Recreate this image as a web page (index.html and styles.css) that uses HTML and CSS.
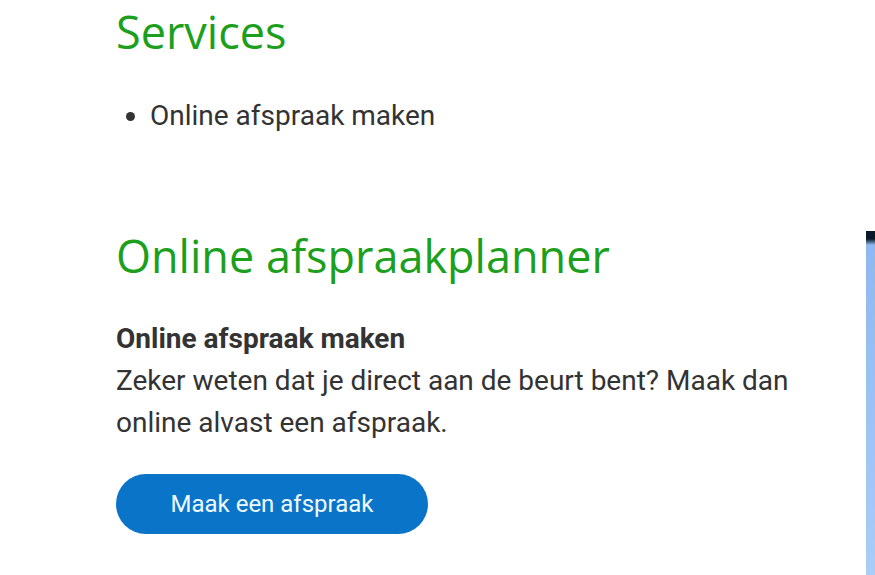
FILE: index.html
```html
<!DOCTYPE html>
<html lang="nl">
<head>
  <meta charset="UTF-8" />
  <title>Online afspraakplanner</title>
  <link rel="stylesheet" href="styles.css">
</head>
<body>

  <div class="page">
    <main class="content">
      <h2>Services</h2>
      <ul class="services">
        <li>Online afspraak maken</li>
      </ul>

      <h2 class="planner-title">Online afspraakplanner</h2>

      <div class="planner">
        <p class="planner-lead">Online afspraak maken</p>
        <p>Zeker weten dat je direct aan de beurt bent? Maak dan online alvast een afspraak.</p>
        <button class="btn">Maak een afspraak</button>
      </div>
    </main>

    <!-- zijbalk, valt grotendeels buiten beeld -->
    <aside class="side"></aside>
  </div>

</body>
</html>
```

FILE: styles.css
```css
* {
  box-sizing: border-box;
}

html, body {
  height: 100%;
}

body {
  margin: 0;
  background: #ffffff;
  font-family: Roboto, "Liberation Sans", sans-serif;
  color: #333333;
  overflow: hidden;
}

.page {
  display: flex;
  height: 100%;
}

.content {
  width: 700px;
  margin-left: 116px;
}

h2 {
  font-family: "Open Sans", Lato, sans-serif;
  font-weight: 400;
  font-size: 45px;
  line-height: 1;
  color: #1c9f1c;
  margin: 9px 0 0;
}

.services {
  margin: 41px 0 0;
  padding-left: 34px;
  font-size: 28px;
  line-height: 42px;
}

.planner-title {
  margin-top: 96px;
}

.planner {
  margin-top: 40px;
  font-size: 28px;
  line-height: 42px;
}

.planner p {
  margin: 0;
}

.planner-lead {
  font-weight: 700;
}

.btn {
  display: block;
  margin-top: 30px;
  width: 312px;
  height: 60px;
  border: none;
  border-radius: 30px;
  background-color: #0a74c8;
  color: #eefaff;
  font-family: Roboto, "Liberation Sans", sans-serif;
  font-size: 24px;
  cursor: pointer;
}

.side {
  margin-left: auto;
  margin-top: 231px;
  width: 9px;
  background: linear-gradient(180deg, #0b1a2a 0, #0b1a2a 8px, #8fb8f0 14px, #a9cdf7 100%);
}
```
